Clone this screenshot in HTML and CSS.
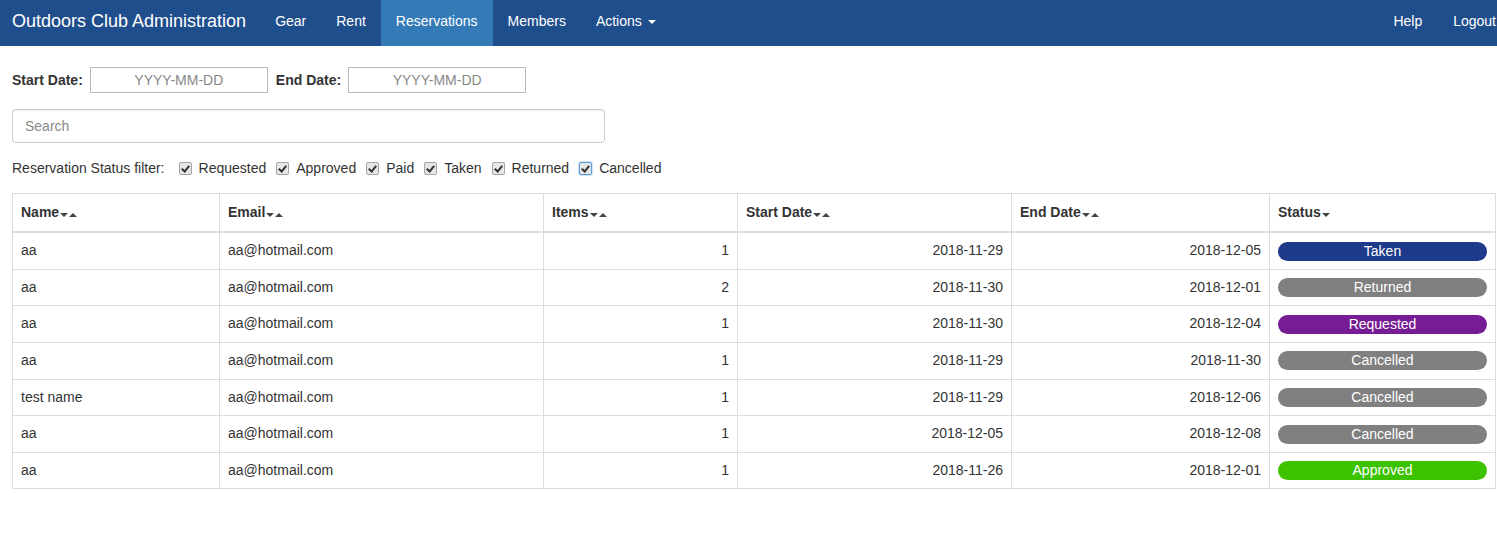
FILE: index.html
```html
<!DOCTYPE html>
<html>
<head>
<meta charset="utf-8">
<link rel="stylesheet" href="styles.css">
</head>
<body>
<nav class="navbar">
  <a class="brand">Outdoors Club Administration</a>
  <ul class="nav">
    <li><a>Gear</a></li>
    <li><a>Rent</a></li>
    <li class="active"><a>Reservations</a></li>
    <li><a>Members</a></li>
    <li><a>Actions <span class="caret"></span></a></li>
  </ul>
  <ul class="nav nav-right">
    <li><a>Help</a></li>
    <li><a>Logout</a></li>
  </ul>
</nav>
<main class="content">
  <div class="dates">
    <label>Start Date:</label>
    <input class="date" placeholder="YYYY-MM-DD">
    <label>End Date:</label>
    <input class="date" placeholder="YYYY-MM-DD">
  </div>
  <input class="search" placeholder="Search">
  <div class="filter">
    <span class="filter-label">Reservation Status filter:</span>
    <label><input type="checkbox" checked> Requested</label>
    <label><input type="checkbox" checked> Approved</label>
    <label><input type="checkbox" checked> Paid</label>
    <label><input type="checkbox" checked> Taken</label>
    <label><input type="checkbox" checked> Returned</label>
    <label><input type="checkbox" class="focus" checked> Cancelled</label>
  </div>
  <table class="table">
    <thead>
      <tr>
        <th class="c1">Name<span class="sort"><i class="dn"></i><i class="up"></i></span></th>
        <th class="c2">Email<span class="sort"><i class="dn"></i><i class="up"></i></span></th>
        <th class="c3">Items<span class="sort"><i class="dn"></i><i class="up"></i></span></th>
        <th class="c4">Start Date<span class="sort"><i class="dn"></i><i class="up"></i></span></th>
        <th class="c5">End Date<span class="sort"><i class="dn"></i><i class="up"></i></span></th>
        <th class="c6">Status<span class="sort"><i class="dn"></i></span></th>
      </tr>
    </thead>
    <tbody>
      <tr><td>aa</td><td>aa@hotmail.com</td><td class="r">1</td><td class="r">2018-11-29</td><td class="r">2018-12-05</td><td><span class="badge taken">Taken</span></td></tr>
      <tr><td>aa</td><td>aa@hotmail.com</td><td class="r">2</td><td class="r">2018-11-30</td><td class="r">2018-12-01</td><td><span class="badge gray">Returned</span></td></tr>
      <tr><td>aa</td><td>aa@hotmail.com</td><td class="r">1</td><td class="r">2018-11-30</td><td class="r">2018-12-04</td><td><span class="badge requested">Requested</span></td></tr>
      <tr><td>aa</td><td>aa@hotmail.com</td><td class="r">1</td><td class="r">2018-11-29</td><td class="r">2018-11-30</td><td><span class="badge gray">Cancelled</span></td></tr>
      <tr><td>test name</td><td>aa@hotmail.com</td><td class="r">1</td><td class="r">2018-11-29</td><td class="r">2018-12-06</td><td><span class="badge gray">Cancelled</span></td></tr>
      <tr><td>aa</td><td>aa@hotmail.com</td><td class="r">1</td><td class="r">2018-12-05</td><td class="r">2018-12-08</td><td><span class="badge gray">Cancelled</span></td></tr>
      <tr><td>aa</td><td>aa@hotmail.com</td><td class="r">1</td><td class="r">2018-11-26</td><td class="r">2018-12-01</td><td><span class="badge approved">Approved</span></td></tr>
    </tbody>
  </table>
</main>
</body>
</html>
```
FILE: styles.css
```css
html, body {
  margin: 0;
  padding: 0;
  overflow: hidden;
}
body {
  font-family: "Liberation Sans", Arial, sans-serif;
  font-size: 14px;
  line-height: 20px;
  color: #333;
  background: #fff;
  width: 1497px;
}
.navbar {
  display: flex;
  align-items: stretch;
  height: 46px;
  background: #1f4e8c;
  color: #fff;
  width: 1511px;
}
.brand {
  font-size: 18px;
  line-height: 20px;
  padding: 11px 15px 15px 12px;
  color: #fff;
}
.nav {
  display: flex;
  list-style: none;
  margin: 0;
  padding: 0;
}
.nav li a {
  display: block;
  padding: 11px 15px 15px;
  line-height: 20px;
  color: #fff;
}
.nav li:first-child a {
  padding-left: 14px;
}
.nav li.active a {
  background: #337ab7;
}
.nav-right {
  margin-left: auto;
}
.nav-right li:first-child a {
  padding-right: 16px;
}
.caret {
  display: inline-block;
  width: 0;
  height: 0;
  margin-left: 2px;
  vertical-align: middle;
  border-top: 4px solid #fff;
  border-left: 4px solid transparent;
  border-right: 4px solid transparent;
}
.content {
  padding: 0 0 0 12px;
}
.dates {
  display: flex;
  align-items: center;
  margin-top: 21px;
  height: 26px;
}
.dates label {
  font-weight: bold;
  margin-right: 7px;
}
.date {
  box-sizing: border-box;
  width: 178px;
  height: 26px;
  border: 1px solid #b8b8b8;
  font-family: "Liberation Sans", Arial, sans-serif;
  font-size: 14px;
  text-align: center;
  margin-right: 8px;
  padding: 0;
}
.date::placeholder, .search::placeholder {
  color: #888;
}
.search {
  display: block;
  box-sizing: border-box;
  width: 593px;
  height: 34px;
  margin-top: 16px;
  border: 1px solid #ccc;
  border-radius: 4px;
  padding: 6px 12px;
  font-family: "Liberation Sans", Arial, sans-serif;
  font-size: 14px;
  box-shadow: inset 0 1px 1px rgba(0,0,0,0.075);
}
.filter {
  display: flex;
  align-items: center;
  margin-top: 15px;
  height: 20px;
}
.filter-label {
  margin-right: 13px;
}
.filter label {
  display: flex;
  align-items: center;
  margin-right: 9px;
}
.filter input {
  -webkit-appearance: none;
  appearance: none;
  box-sizing: border-box;
  width: 13px;
  height: 13px;
  margin: 0 7px 0 1px;
  border: 1px solid #a5a5a5;
  border-radius: 2px;
  background: #e6e6e6;
  position: relative;
}
.filter input::after {
  content: "";
  position: absolute;
  left: 3px;
  top: 1px;
  width: 3px;
  height: 6px;
  border: solid #333;
  border-width: 0 2px 2px 0;
  transform: rotate(40deg);
}
.filter input.focus {
  border: 1px solid #5b9dd9;
  box-shadow: 0 0 0 1px #cfe3f7;
}
.table {
  margin-top: 15px;
  border-collapse: collapse;
  width: 1484px;
  table-layout: fixed;
}
.table th, .table td {
  border: 1px solid #ddd;
  padding: 8px;
  line-height: 19.6px;
  text-align: left;
}
.table th {
  border-bottom: 2px solid #ddd;
  font-weight: bold;
  line-height: 20px;
}
.table td.r {
  text-align: right;
}
.c1 { width: 190px; }
.c2 { width: 307px; }
.c3 { width: 177px; }
.c4 { width: 257px; }
.c5 { width: 241px; }
.c6 { width: 209px; }
.sort {
  display: inline-block;
  margin-left: 1px;
  vertical-align: middle;
}
.sort i {
  display: inline-block;
  width: 0;
  height: 0;
  border-left: 4px solid transparent;
  border-right: 4px solid transparent;
  margin-right: 1px;
  vertical-align: middle;
}
.sort i.dn {
  border-top: 4px solid #444;
}
.sort i.up {
  border-bottom: 4px solid #444;
}
.badge {
  display: block;
  height: 19px;
  line-height: 19px;
  border-radius: 10px;
  text-align: center;
  color: #fff;
  font-size: 14px;
}
.taken { background: #1e3a8a; }
.gray { background: #808080; }
.requested { background: #761c94; }
.approved { background: #3dc200; }
```
